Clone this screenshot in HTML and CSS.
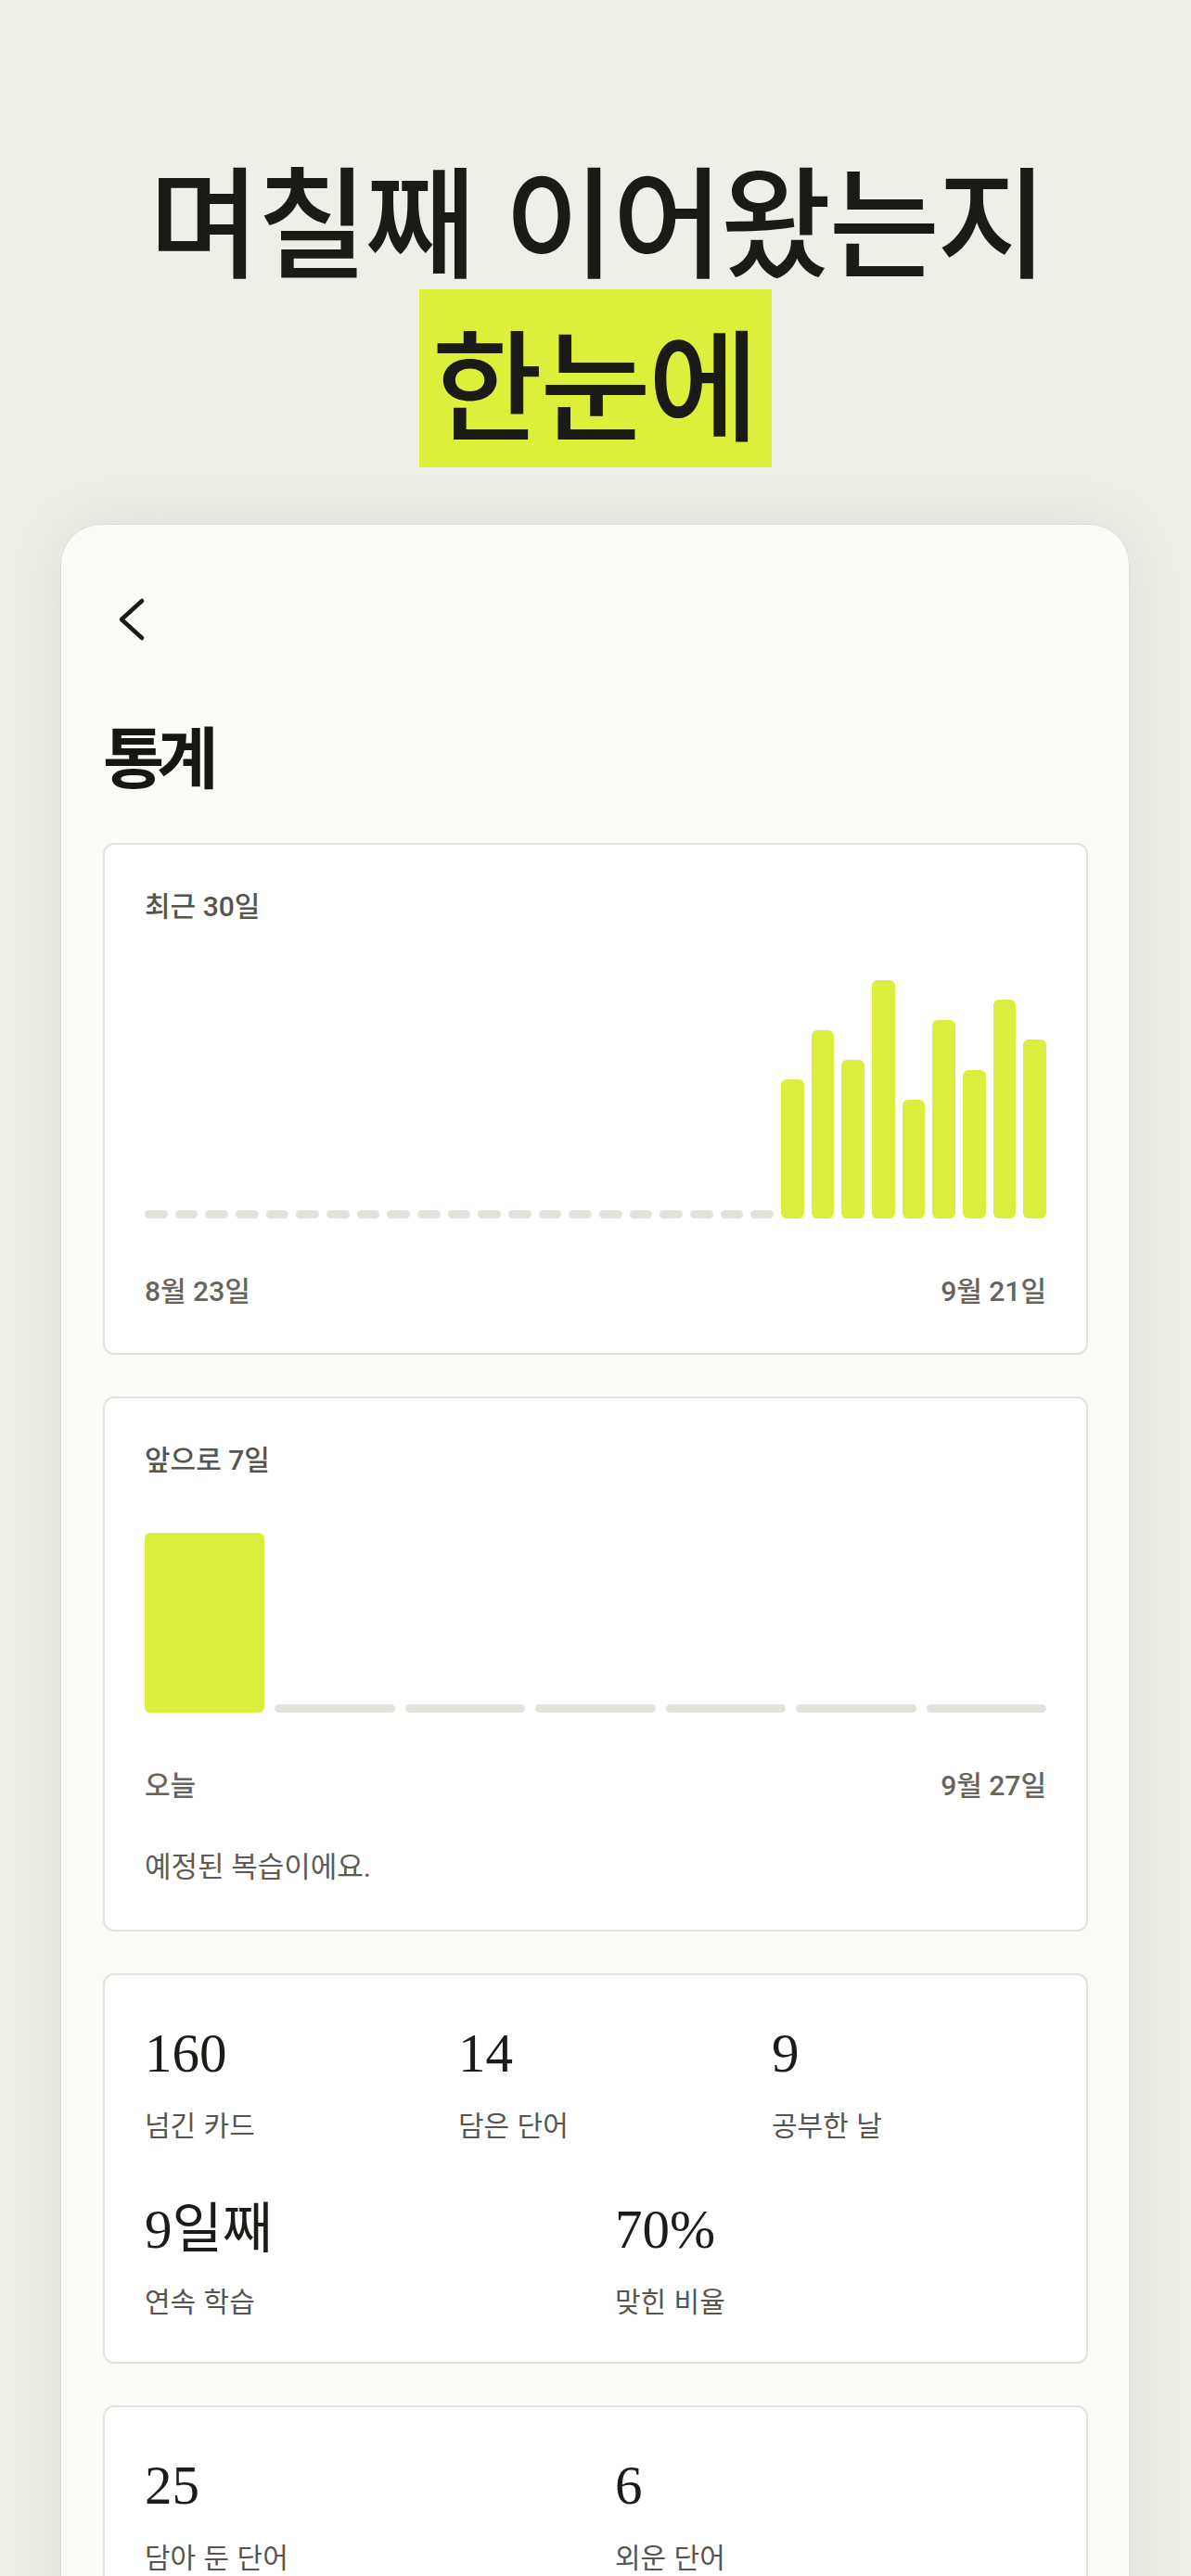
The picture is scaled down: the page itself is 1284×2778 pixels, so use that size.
FILE: index.html
```html
<!DOCTYPE html>
<html lang="ko">
<head>
<meta charset="utf-8">
<title>통계</title>
<link rel="stylesheet" href="styles.css">
</head>
<body>
<header class="hero">
  <h1 class="headline"><span class="line">며칠째 이어왔는지</span><span class="mark">한눈에</span></h1>
</header>
<main class="phone">
  <button class="back" aria-label="뒤로">
    <svg width="44" height="52" viewBox="0 0 44 52"><polyline points="32,6 10,26 32,46"/></svg>
  </button>
  <h2 class="title">통계</h2>

  <section class="card">
    <p class="label">최근 30일</p>
    <div class="chart30">
      <span class="dash"></span><span class="dash"></span><span class="dash"></span><span class="dash"></span><span class="dash"></span><span class="dash"></span><span class="dash"></span>
      <span class="dash"></span><span class="dash"></span><span class="dash"></span><span class="dash"></span><span class="dash"></span><span class="dash"></span><span class="dash"></span>
      <span class="dash"></span><span class="dash"></span><span class="dash"></span><span class="dash"></span><span class="dash"></span><span class="dash"></span><span class="dash"></span>
      <span class="bar" style="height:150px"></span>
      <span class="bar" style="height:203px"></span>
      <span class="bar" style="height:171px"></span>
      <span class="bar" style="height:257px"></span>
      <span class="bar" style="height:128px"></span>
      <span class="bar" style="height:214px"></span>
      <span class="bar" style="height:160px"></span>
      <span class="bar" style="height:236px"></span>
      <span class="bar" style="height:193px"></span>
    </div>
    <div class="axis"><span>8월 23일</span><span>9월 21일</span></div>
  </section>

  <section class="card">
    <p class="label">앞으로 7일</p>
    <div class="chart7">
      <span class="bar big" style="height:194px"></span>
      <span class="dash"></span><span class="dash"></span><span class="dash"></span>
      <span class="dash"></span><span class="dash"></span><span class="dash"></span>
    </div>
    <div class="axis"><span>오늘</span><span>9월 27일</span></div>
    <p class="note">예정된 복습이에요.</p>
  </section>

  <section class="card stats-card">
    <div class="stats three">
      <div class="stat"><div class="stat-value">160</div><div class="stat-label">넘긴 카드</div></div>
      <div class="stat"><div class="stat-value">14</div><div class="stat-label">담은 단어</div></div>
      <div class="stat"><div class="stat-value">9</div><div class="stat-label">공부한 날</div></div>
    </div>
    <div class="stats two">
      <div class="stat"><div class="stat-value">9일째</div><div class="stat-label">연속 학습</div></div>
      <div class="stat"><div class="stat-value">70%</div><div class="stat-label">맞힌 비율</div></div>
    </div>
  </section>

  <section class="card stats-card">
    <div class="stats two">
      <div class="stat"><div class="stat-value">25</div><div class="stat-label">담아 둔 단어</div></div>
      <div class="stat"><div class="stat-value">6</div><div class="stat-label">외운 단어</div></div>
    </div>
  </section>
</main>
</body>
</html>
```

FILE: styles.css
```css
html, body {
  margin: 0;
  height: 100vh;
  overflow: hidden;
}

body {
  background: #efefe8;
  font-family: "Noto Sans CJK KR", sans-serif;
  color: #1a1a16;
}

.hero {
  padding-top: 157px;
}

.headline {
  margin: 0;
  display: flex;
  flex-direction: column;
  align-items: center;
  font-size: 130px;
  font-weight: 500;
  letter-spacing: -3px;
  color: #1a1a16;
}

.line {
  display: block;
  line-height: 150px;
  padding-left: 3px;
}

.mark {
  display: inline-block;
  margin-top: 5px;
  height: 192px;
  line-height: 192px;
  padding: 0 17px 0 14px;
  background: #dcef3b;
}

.phone {
  display: block;
  margin: 61px 66px 0 65px;
  padding: 76px 44px 60px 45px;
  background: #fbfbf8;
  border: 1px solid #dfded6;
  border-radius: 44px;
  box-shadow: 0 0 70px rgba(80, 75, 45, 0.10);
}

.back {
  display: block;
  margin: 0 0 0 10px;
  padding: 0;
  border: 0;
  background: none;
  width: 44px;
  height: 52px;
}

.back svg {
  display: block;
  fill: none;
  stroke: #1a1a16;
  stroke-width: 4.5;
  stroke-linecap: round;
  stroke-linejoin: round;
}

.title {
  margin: 76px 0 0;
  font-size: 72px;
  line-height: 86px;
  font-weight: 700;
  letter-spacing: -8px;
  color: #161613;
}

.card {
  margin-top: 45px;
  background: #ffffff;
  border: 2px solid #e4e3dc;
  border-radius: 12px;
  padding: 47px 43px 46px;
}

.title + .card {
  margin-top: 53px;
}

.label {
  margin: 0;
  font: 500 30px/40px Roboto, "Noto Sans CJK KR", sans-serif;
  color: #57554d;
}

.chart30 {
  margin-top: 36px;
  height: 280px;
  display: grid;
  grid-template-columns: repeat(30, 1fr);
  column-gap: 8px;
  align-items: end;
}

.dash {
  display: block;
  height: 9px;
  border-radius: 4.5px;
  background: #e3e2db;
}

.bar {
  display: block;
  border-radius: 6px;
  background: #dcee3d;
}

.chart7 {
  margin-top: 58px;
  height: 194px;
  display: grid;
  grid-template-columns: repeat(7, 1fr);
  column-gap: 11px;
  align-items: end;
}

.axis {
  margin-top: 59px;
  display: flex;
  justify-content: space-between;
  font: 500 30px/40px Roboto, "Noto Sans CJK KR", sans-serif;
  color: #66645c;
}

.note {
  margin: 47px 0 0;
  font: 400 31px/42px Roboto, "Noto Sans CJK KR", sans-serif;
  color: #5d5b53;
}

.stats-card {
  padding-top: 49px;
  padding-bottom: 47px;
}

.stats {
  display: grid;
  column-gap: 42px;
}

.stats.three {
  grid-template-columns: repeat(3, 1fr);
}

.stats.two {
  grid-template-columns: repeat(2, 1fr);
}

.stats + .stats {
  margin-top: 59px;
}

.stat-value {
  font: 400 59px/70px "Liberation Serif", "Noto Sans CJK KR", serif;
  color: #1b1b17;
}

.stat-label {
  margin-top: 21px;
  font: 400 30px/40px "Noto Sans CJK KR", sans-serif;
  color: #57554d;
}
```
